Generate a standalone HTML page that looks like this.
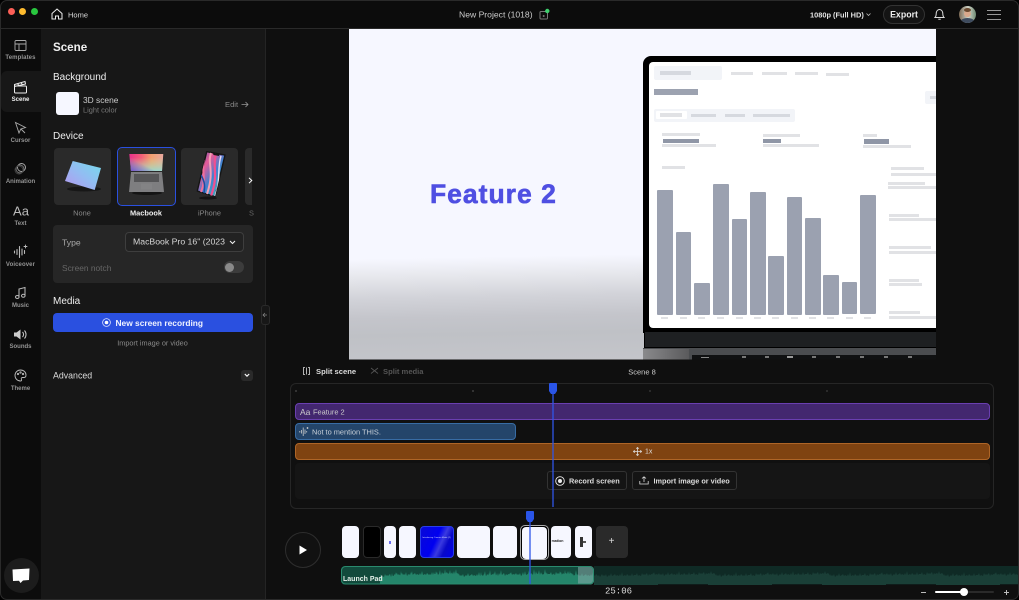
<!DOCTYPE html>
<html><head><meta charset="utf-8"><title>New Project</title>
<style>
*{box-sizing:border-box}
html,body{margin:0;padding:0;background:#000}
#r{position:relative;width:1019px;height:600px;overflow:hidden;background:#0f0f0f;font-family:"Liberation Sans",sans-serif;color:#eee}
#r div,#r span.a,#r svg.a{position:absolute}
.t{position:absolute;white-space:nowrap;line-height:1;transform:translateY(-50%)}
.c{transform:translate(-50%,-50%)}
.nl{position:absolute;left:0;width:41px;text-align:center;font-size:6px;line-height:1;color:#949494;font-weight:bold}
svg{display:block}
.h{font-size:10px;color:#eee}
.m{background:#e1e2e5}
.d{background:#f2f4f8}
.s{background:#d6d9df}
.b{background:#9ba1b0;border-radius:1px;width:15.5px}
.y{background:#e1e2e5;width:7px;height:2px;top:317px}
.th{background:#f6f7ff;border-radius:4px;top:526px;height:32px}
</style></head><body><div id="r">

<!-- top bar -->
<div style="left:0;top:0;width:1019px;height:29px;background:#0c0c0c;border-bottom:1px solid #2a2a2a"></div>
<div style="left:7.5px;top:7.5px;width:7px;height:7px;border-radius:50%;background:#fc5f57"></div>
<div style="left:19px;top:7.5px;width:7px;height:7px;border-radius:50%;background:#febb2e"></div>
<div style="left:31px;top:7.5px;width:7px;height:7px;border-radius:50%;background:#29c73f"></div>
<svg class="a" style="left:51px;top:8px" width="12" height="12" viewBox="0 0 12 12" fill="none" stroke="#eee" stroke-width="1"><path d="M1 5.5 6 1l5 4.5V11H7.5V8h-3v3H1z"/></svg>
<span class="t" style="left:68px;top:14.5px;font-size:7.5px;color:#ddd">Home</span>
<span class="t" style="left:459px;top:14.5px;font-size:8.6px;color:#ccc">New Project (1018)</span>
<svg class="a" style="left:539px;top:8px" width="11" height="12" viewBox="0 0 11 12" fill="none"><rect x="1" y="3.5" width="7.5" height="7.5" rx="1" stroke="#777"/><circle cx="4.7" cy="8" r="1" fill="#777"/><circle cx="8.3" cy="3" r="2.2" fill="#3ecf6d"/></svg>
<span class="t" style="left:810px;top:14.5px;font-size:7.4px;color:#e5e5e5;font-weight:bold">1080p (Full HD)</span>
<svg class="a" style="left:866px;top:13px" width="5" height="3" viewBox="0 0 5 3" fill="none" stroke="#bbb" stroke-width=".8"><path d="M.5.5 2.5 2.5 4.5.5"/></svg>
<div style="left:883px;top:5px;width:42px;height:19px;border-radius:10px;border:1px solid #333;background:#141414"></div>
<span class="t c" style="left:904px;top:14.5px;font-size:8.8px;font-weight:bold;color:#eee">Export</span>
<svg class="a" style="left:934px;top:8px" width="11" height="13" viewBox="0 0 11 13" fill="none" stroke="#ddd" stroke-width="1"><path d="M1 9.5c1-1 1.200-2 1.200-4C2.200 3.500 3.500 1.500 5.500 1.500S8.800 3.500 8.800 5.500c0 2 .2 3 1.200 4zM4.300 11.300h2.400"/></svg>
<div style="left:958.500px;top:6px;width:17px;height:17px;border-radius:50%;background:radial-gradient(circle at 50% 45%,#d9a98c 0 26%,transparent 28%),linear-gradient(90deg,#7d6a55,#cfd4c8 55%,#6f8a72);overflow:hidden"><div style="left:2px;top:12px;width:13px;height:6px;border-radius:50%;background:#3e4b5e"></div><div style="left:5px;top:2px;width:7px;height:4px;border-radius:50%;background:#6b4a30"></div></div>
<div style="left:987px;top:9.500px;width:14px;height:1px;background:#999"></div>
<div style="left:987px;top:14px;width:14px;height:1px;background:#999"></div>
<div style="left:987px;top:18.500px;width:14px;height:1px;background:#999"></div>

<!-- left nav -->
<div style="left:0;top:29px;width:41px;height:571px;background:#0c0c0c"></div>
<div style="left:265px;top:29px;width:1px;height:571px;background:#242424"></div>
<div style="left:41px;top:29px;width:224px;height:571px;background:#171717"></div>
<div style="left:1px;top:71px;width:40px;height:41px;background:#171717;border-radius:6px 0 0 6px"></div>

<svg class="a" style="left:14px;top:39px" width="13" height="13" viewBox="0 0 13 13" fill="none" stroke="#aaa" stroke-width=".9"><rect x="1" y="1.500" width="11" height="10" rx="1"/><path d="M1 5h11M5 5v6.500"/></svg>
<div class="nl" style="top:55px;letter-spacing:.1px">Templates</div>
<svg class="a" style="left:13px;top:80px" width="15" height="14" viewBox="0 0 15 14" fill="none" stroke="#eee" stroke-width="1"><rect x="1.500" y="6" width="12" height="7" rx="1"/><path d="M1.500 4.500 12 1.500l.5 2.500-11 2.500zM4.500 3.800l1.500 1.800M8 2.800l1.500 1.800"/></svg>
<div class="nl" style="top:97px;color:#eee">Scene</div>
<svg class="a" style="left:14px;top:121px" width="13" height="13" viewBox="0 0 13 13" fill="none" stroke="#aaa" stroke-width=".9"><path d="M1.500 1.500 5 12l1.800-4L11.500 6.500zM7 8l4 4"/></svg>
<div class="nl" style="top:138px">Cursor</div>
<svg class="a" style="left:14px;top:162px" width="13" height="13" viewBox="0 0 13 13" fill="none" stroke="#aaa" stroke-width=".9"><circle cx="7.500" cy="5.500" r="4"/><circle cx="6" cy="7" r="4" stroke="#777"/><circle cx="5" cy="8" r="4" stroke="#444"/></svg>
<div class="nl" style="top:179px">Animation</div>
<span class="t c" style="left:21px;top:211px;font-size:13px;color:#bbb">Aa</span>
<div class="nl" style="top:221px">Text</div>
<svg class="a" style="left:13px;top:244px" width="15" height="15" viewBox="0 0 15 15" fill="none" stroke="#bbb" stroke-width="1.100" stroke-linecap="round"><path d="M1.500 7v2M4 5.500v5M6.500 2.500v11M9 5v6M11.500 6.500v3"/><path d="M12.500 1v3M11 2.500h3" stroke-width=".9"/></svg>
<div class="nl" style="top:262px;letter-spacing:.1px">Voiceover</div>
<svg class="a" style="left:14px;top:286px" width="13" height="14" viewBox="0 0 13 14" fill="none" stroke="#bbb" stroke-width="1"><path d="M5 11V3l6-1.500v8"/><ellipse cx="3.300" cy="11" rx="1.800" ry="1.500"/><ellipse cx="9.300" cy="9.800" rx="1.800" ry="1.500"/></svg>
<div class="nl" style="top:303px">Music</div>
<svg class="a" style="left:13px;top:328px" width="15" height="13" viewBox="0 0 15 13" fill="none"><path d="M1 4.500h2.500L7.500 1.500v10L3.500 8.500H1z" fill="#ccc"/><path d="M9.500 4a3.500 3.500 0 0 1 0 5M11.500 2.500a6 6 0 0 1 0 8" stroke="#ccc"/></svg>
<div class="nl" style="top:344px">Sounds</div>
<svg class="a" style="left:14px;top:369px" width="13" height="13" viewBox="0 0 13 13" fill="none" stroke="#bbb" stroke-width=".9"><path d="M6.500 1a5.500 5.500 0 1 0 0 11c1.200 0 1.300-1 .9-1.700-.5-.9.100-1.800 1.100-1.800H10c1.500 0 2-1.200 2-2.500C12 3 9.500 1 6.500 1z"/><circle cx="4" cy="5" r=".7"/><circle cx="6.500" cy="3.500" r=".7"/><circle cx="9" cy="5" r=".7"/></svg>
<div class="nl" style="top:385.500px">Theme</div>
<div style="left:3.500px;top:558px;width:35px;height:35px;border-radius:50%;background:#1c1c1c"></div>
<svg class="a" style="left:11px;top:567px" width="20" height="18" viewBox="0 0 20 18"><path d="M1.500 2.500 18.500 1.500 18 13 12 13.500 9.500 16 8 13.800 2 14z" fill="#fff"/></svg>

<!-- panel -->
<span class="t" style="left:53px;top:48px;font-size:11.600px;font-weight:bold;color:#f0f0f0">Scene</span>
<span class="t h" style="left:53px;top:78px">Background</span>
<div style="left:55.500px;top:92px;width:23px;height:23px;border-radius:3px;background:#f6f7ff"></div>
<span class="t" style="left:83px;top:100px;font-size:8.400px;color:#ccc">3D scene</span>
<span class="t" style="left:83px;top:110px;font-size:7.400px;color:#777">Light color</span>
<span class="t" style="left:225px;top:104.500px;font-size:7.600px;color:#888">Edit</span>
<svg class="a" style="left:241px;top:101px" width="8" height="7" viewBox="0 0 8 7" fill="none" stroke="#999" stroke-width=".8"><path d="M.5 3.500h6.500M4.500 1l2.500 2.500L4.500 6"/></svg>
<span class="t h" style="left:53px;top:136.500px">Device</span>

<div style="left:54px;top:148px;width:57px;height:56.500px;border-radius:4px;background:#2a2a2a"></div>
<svg class="a" style="left:60px;top:155px" width="46" height="42" viewBox="0 0 46 42"><defs><linearGradient id="g1" x1="0" y1="1" x2="1" y2="0"><stop offset="0" stop-color="#b796f0"/><stop offset=".5" stop-color="#93bcf2"/><stop offset="1" stop-color="#74dcec"/></linearGradient></defs><ellipse cx="24" cy="34" rx="17" ry="2.500" fill="#101010" opacity=".7"/><path d="M12.700 6 41 13 34.700 35 5 26z" fill="url(#g1)"/></svg>
<div style="left:117px;top:147px;width:58.500px;height:58.500px;border-radius:5px;background:#2a2a2a;border:1.500px solid #2a50e0"></div>
<svg class="a" style="left:128px;top:153px" width="37" height="44" viewBox="0 0 37 44"><defs><linearGradient id="g2" x1="0" y1="0" x2="1" y2="0"><stop offset="0" stop-color="#e8308c"/><stop offset=".35" stop-color="#f25c78"/><stop offset=".65" stop-color="#f2a070"/><stop offset="1" stop-color="#e8a8a0"/></linearGradient><linearGradient id="g2b" x1="0" y1="0" x2="0" y2="1"><stop offset=".2" stop-color="#c8e8a0" stop-opacity="0"/><stop offset="1" stop-color="#98d8d0" stop-opacity=".95"/></linearGradient><linearGradient id="g2c" x1="0" y1="1" x2="1" y2="0"><stop offset="0" stop-color="#7040c8" stop-opacity=".9"/><stop offset=".4" stop-color="#7040c8" stop-opacity="0"/></linearGradient></defs><ellipse cx="19" cy="40" rx="15" ry="2" fill="#141414"/><path d="M1.300 1H35.300L34 18H3z" fill="url(#g2)"/><path d="M1.300 1H35.300L34 18H3z" fill="url(#g2b)"/><path d="M1.300 1H35.300L34 18H3z" fill="url(#g2c)"/><path d="M3 19H34L36 39H1z" fill="#7e7e80"/><rect x="6" y="21" width="25" height="8" fill="#555557"/><rect x="13" y="30.500" width="11" height="6" fill="#838385"/></svg>
<div style="left:181px;top:148px;width:57px;height:56.500px;border-radius:4px;background:#2a2a2a"></div>
<svg class="a" style="left:195px;top:150px" width="32" height="52" viewBox="0 0 32 52"><defs><linearGradient id="g3" x1="0" y1="0" x2="1" y2="1"><stop offset="0" stop-color="#3a5fb0"/><stop offset=".3" stop-color="#e85a98"/><stop offset=".55" stop-color="#4080d0"/><stop offset=".8" stop-color="#40a8c0"/><stop offset="1" stop-color="#e85a98"/></linearGradient><clipPath id="pc"><path d="M11.700 1.700 30 5 20 46.700 2.300 41z"/></clipPath></defs><ellipse cx="13" cy="48" rx="9" ry="1.500" fill="#141414"/><path d="M11.700 1.700 30 5 20 46.700 2.300 41z" fill="url(#g3)" stroke="#151515" stroke-width="1.400" stroke-linejoin="round"/><g clip-path="url(#pc)" fill="none"><path d="M16 3C12 14 20 20 12 44" stroke="#f4a0b8" stroke-width="2"/><path d="M21 4C17 16 24 24 16 46" stroke="#f04f90" stroke-width="2.200"/><path d="M26 6C22 18 26 30 20 46" stroke="#e8e0f4" stroke-width="1.400"/><path d="M9 10C6 20 12 28 6 42" stroke="#f0709c" stroke-width="2"/><path d="M6 25C10 32 10 36 9 44" stroke="#1c4ca0" stroke-width="1.500"/></g><path d="M18 3.200 24.500 4.300 24 6 18.500 5z" fill="#151515"/></svg>
<div style="left:245px;top:148px;width:7px;height:56.500px;border-radius:4px 0 0 4px;background:#2a2a2a"></div>
<svg class="a" style="left:248px;top:177px" width="5" height="7" viewBox="0 0 5 7" fill="none" stroke="#fff" stroke-width="1"><path d="M1 .8 3.800 3.500 1 6.200"/></svg>
<span class="t c" style="left:82px;top:212.500px;font-size:7.400px;color:#888">None</span>
<span class="t c" style="left:146px;top:212.500px;font-size:7.400px;color:#eee;font-weight:bold">Macbook</span>
<span class="t c" style="left:209.500px;top:212.500px;font-size:7.400px;color:#888">iPhone</span>
<span class="t" style="left:249px;top:212.500px;font-size:7.400px;color:#666">S</span>

<div style="left:53px;top:225px;width:200px;height:58px;background:#262626;border-radius:4px"></div>
<span class="t" style="left:62px;top:242.500px;font-size:8.600px;color:#aaa">Type</span>
<div style="left:125px;top:232px;width:118.500px;height:19.500px;border:1px solid #3e3e3e;border-radius:4px;background:#222"></div>
<span class="t" style="left:133px;top:242px;font-size:8.700px;color:#d8d8d8">MacBook Pro 16" (2023</span>
<svg class="a" style="left:229px;top:240px" width="7" height="5" viewBox="0 0 7 5" fill="none" stroke="#eee" stroke-width="1.100"><path d="M1 1 3.500 3.500 6 1"/></svg>
<span class="t" style="left:62px;top:267.500px;font-size:8.400px;color:#666">Screen notch</span>
<div style="left:224px;top:261px;width:19.500px;height:12px;background:#3c3c3c;border-radius:6px"></div>
<div style="left:225px;top:262.500px;width:9px;height:9px;background:#8a8a8a;border-radius:50%"></div>
<span class="t h" style="left:53px;top:301.500px">Media</span>
<div style="left:53px;top:313px;width:200px;height:19px;background:#2a50e0;border-radius:4px"></div>
<svg class="a" style="left:102px;top:318px" width="9" height="9" viewBox="0 0 9 9" fill="none"><circle cx="4.500" cy="4.500" r="3.900" stroke="#dfe5ff" stroke-width=".8"/><circle cx="4.500" cy="4.500" r="1.800" fill="#fff"/></svg>
<span class="t" style="left:115.500px;top:322.500px;font-size:8.400px;color:#f0f3ff;font-weight:bold">New screen recording</span>
<span class="t c" style="left:152.500px;top:342.500px;font-size:7.300px;color:#8a8a8a">Import image or video</span>
<span class="t" style="left:53px;top:375.500px;font-size:8.800px;color:#ddd">Advanced</span>
<div style="left:241px;top:370px;width:12px;height:11px;background:#2a2a2a;border-radius:3px"></div>
<svg class="a" style="left:244px;top:373px" width="6" height="5" viewBox="0 0 6 5" fill="none" stroke="#fff" stroke-width="1.100"><path d="M.8 1 3 3.200 5.200 1"/></svg>
<div style="left:260.500px;top:305px;width:9px;height:20px;background:#171717;border:1px solid #2a2a2a;border-radius:3px"></div>
<svg class="a" style="left:262px;top:312px" width="6" height="6" viewBox="0 0 6 6" fill="none" stroke="#888" stroke-width=".7"><path d="M5 3H1M3 1 1 3l2 2"/></svg>

<!-- canvas -->
<div style="left:0;top:0;width:1019px;height:600px;clip-path:inset(29px 83px 240.500px 349px)">
<div style="left:349px;top:29px;width:587px;height:331px;background:linear-gradient(179deg,#f6f7ff 0,#f6f7ff 67.500%,#e6e7ec 73%,#d2d3d9 79%,#c4c5cb 85%,#bfc1c6 90%,#c5c6cb 100%)"></div>
<span class="t" style="left:430px;top:194px;font-size:26.500px;font-weight:bold;color:#4f4fe2;letter-spacing:1px;-webkit-text-stroke:.6px #4f4fe2">Feature 2</span>

<div style="left:642.500px;top:56px;width:310px;height:277px;background:#000;border-radius:8px 8px 0 0"></div>
<div style="left:644px;top:330px;width:300px;height:18px;background:#000"></div>
<div style="left:645px;top:332px;width:295px;height:15px;background:#1e2022"></div>
<div style="left:643px;top:348px;width:300px;height:12px;background:#4b4d50"></div>
<div style="left:643px;top:349px;width:46px;height:11px;background:linear-gradient(90deg,#8a8a8c,#5a5a5c)"></div>
<div style="left:692px;top:355px;width:250px;height:5px;background:#101112"></div>
<div style="left:701px;top:357px;width:8px;height:1px;background:#888"></div>
<div style="left:742px;top:356px;width:4px;height:2px;background:#777"></div>
<div style="left:765px;top:356px;width:4px;height:2px;background:#777"></div>
<div style="left:787px;top:355.500px;width:6px;height:2px;background:#999"></div>
<div style="left:812px;top:356px;width:4px;height:2px;background:#777"></div>
<div style="left:836px;top:356px;width:4px;height:2px;background:#777"></div>
<div style="left:860px;top:356px;width:4px;height:2px;background:#777"></div>
<div style="left:884px;top:356px;width:4px;height:2px;background:#777"></div>
<div style="left:908px;top:356px;width:4px;height:2px;background:#777"></div>
<div style="left:649px;top:62px;width:300px;height:265.500px;background:#fff;border-radius:4px"></div>

<div class="d" style="left:654px;top:66px;width:68px;height:14px;border-radius:2px"></div>
<div class="s" style="left:660px;top:71px;width:31px;height:3.500px"></div>
<div class="m" style="left:731px;top:72px;width:22px;height:3px"></div>
<div class="m" style="left:762px;top:72px;width:25px;height:3px"></div>
<div class="m" style="left:795px;top:72px;width:23px;height:3px"></div>
<div class="m" style="left:826px;top:72.500px;width:23px;height:3px"></div>
<div style="left:654px;top:89px;width:44px;height:6px;background:#9ca2b0"></div>
<div class="d" style="left:925px;top:91px;width:15px;height:13px;border-radius:2px"></div>
<div class="s" style="left:930px;top:96px;width:8px;height:3px"></div>
<div class="d" style="left:654px;top:109px;width:141px;height:13px;border-radius:2px"></div>
<div style="left:656px;top:111px;width:31px;height:8px;background:#fff;border-radius:1px"></div>
<div class="m" style="left:660px;top:113px;width:22px;height:4px"></div>
<div class="s" style="left:691px;top:114px;width:25px;height:3px"></div>
<div class="s" style="left:725px;top:114px;width:20px;height:3px"></div>
<div class="s" style="left:753px;top:114px;width:37px;height:3px"></div>

<div class="m" style="left:662px;top:133px;width:38px;height:3px"></div>
<div style="left:662.500px;top:138.500px;width:36.500px;height:4.500px;background:#8f96a6"></div>
<div class="m" style="left:662px;top:144px;width:54px;height:2.500px"></div>
<div class="m" style="left:763px;top:133.500px;width:37px;height:3px"></div>
<div style="left:763px;top:138.500px;width:18px;height:4.500px;background:#8f96a6"></div>
<div class="m" style="left:763px;top:144px;width:56px;height:2.500px"></div>
<div class="m" style="left:863px;top:134px;width:14px;height:3px"></div>
<div style="left:863.500px;top:139px;width:25px;height:4.500px;background:#8f96a6"></div>
<div class="m" style="left:863px;top:145px;width:48px;height:2.500px"></div>
<div class="m" style="left:662px;top:166px;width:23px;height:3px"></div>

<div class="m" style="left:891px;top:167px;width:33px;height:3px"></div>
<div class="m" style="left:891px;top:172.500px;width:46px;height:3px"></div>
<div class="m" style="left:888px;top:182px;width:37px;height:3px"></div>
<div class="m" style="left:888px;top:186px;width:48px;height:3px"></div>
<div class="m" style="left:889px;top:214px;width:30px;height:3px"></div>
<div class="m" style="left:889px;top:218px;width:47px;height:3px"></div>
<div class="m" style="left:889px;top:246px;width:42px;height:3px"></div>
<div class="m" style="left:889px;top:251px;width:47px;height:3px"></div>
<div class="m" style="left:889px;top:279px;width:30px;height:3px"></div>
<div class="m" style="left:889px;top:283px;width:33px;height:3px"></div>
<div class="m" style="left:889px;top:311px;width:31px;height:3px"></div>
<div class="m" style="left:889px;top:316px;width:47px;height:3px"></div>

<div class="b" style="left:657px;top:190px;height:125px"></div>
<div class="b" style="left:675.700px;top:232px;height:83px"></div>
<div class="b" style="left:694px;top:283px;height:32px"></div>
<div class="b" style="left:713px;top:184px;height:131px"></div>
<div class="b" style="left:731.500px;top:219px;height:96px"></div>
<div class="b" style="left:750px;top:192px;height:123px"></div>
<div class="b" style="left:768px;top:256px;height:59px"></div>
<div class="b" style="left:786.500px;top:197px;height:118px"></div>
<div class="b" style="left:805px;top:218px;height:96.500px"></div>
<div class="b" style="left:823px;top:275px;height:39.500px"></div>
<div class="b" style="left:841.500px;top:282px;height:32px"></div>
<div class="b" style="left:860px;top:195px;height:119px"></div>
<div class="y" style="left:661px"></div><div class="y" style="left:680px"></div><div class="y" style="left:698px"></div><div class="y" style="left:717px"></div><div class="y" style="left:735.500px"></div><div class="y" style="left:754px"></div><div class="y" style="left:772px"></div><div class="y" style="left:791px"></div><div class="y" style="left:809px"></div><div class="y" style="left:827px"></div><div class="y" style="left:846px"></div><div class="y" style="left:864px;top:316.500px"></div>
</div>

<!-- timeline toolbar -->
<svg class="a" style="left:302px;top:367px" width="9" height="8" viewBox="0 0 9 8" fill="none" stroke="#ddd" stroke-width=".8"><path d="M3 .5H1.500v7H3M6 .5h1.500v7H6M4.500 .5v7"/></svg>
<span class="t" style="left:316px;top:371.500px;font-size:7.600px;color:#ddd;font-weight:bold">Split scene</span>
<svg class="a" style="left:370px;top:367px" width="9" height="8" viewBox="0 0 9 8" fill="none" stroke="#555" stroke-width=".8"><path d="M1 1 8 6.500M8 1 1 6.500"/></svg>
<span class="t" style="left:383px;top:371.500px;font-size:7.600px;color:#555;font-weight:bold">Split media</span>
<span class="t c" style="left:642px;top:371.500px;font-size:7.500px;color:#ccc">Scene 8</span>

<div style="left:290px;top:383px;width:704px;height:126px;border:1px solid #262626;border-radius:6px;background:#101010"></div>
<div style="left:295px;top:390px;width:2px;height:2px;background:#333"></div>
<div style="left:472px;top:390px;width:2px;height:2px;background:#333"></div>
<div style="left:649px;top:390px;width:2px;height:2px;background:#2a2a2a"></div>
<div style="left:826px;top:390px;width:2px;height:2px;background:#2a2a2a"></div>

<div style="left:295px;top:403px;width:695px;height:17px;background:#43276f;border:1px solid #6a3fb0;border-radius:4px"></div>
<span class="t" style="left:300px;top:412px;font-size:8.500px;color:#ccc">Aa</span>
<span class="t" style="left:313px;top:412px;font-size:7.400px;color:#ccc">Feature 2</span>
<div style="left:295px;top:423px;width:221px;height:17px;background:#24456a;border:1px solid #386ca4;border-radius:4px"></div>
<svg class="a" style="left:299px;top:426px" width="10" height="11" viewBox="0 0 10 11" fill="none" stroke="#ccc" stroke-width=".8"><path d="M.8 5v1.500M2.500 4v3.500M4.200 1.500v8.500M6 3.500v4.500M7.700 5v1.500M8.500 1v2M7.500 2h2"/></svg>
<span class="t" style="left:312px;top:432px;font-size:7.400px;color:#c8d0d8">Not to mention THIS.</span>
<div style="left:295px;top:443px;width:695px;height:17px;background:#7f4311;border:1px solid #ae6527;border-radius:4px"></div>
<svg class="a" style="left:633px;top:447px" width="9" height="9" viewBox="0 0 9 9" fill="none" stroke="#ddd" stroke-width=".8"><path d="M4.500 .5v8M.5 4.500h8M3.300 1.700 4.500 .5l1.200 1.200M3.300 7.300l1.200 1.200 1.200-1.200M1.700 3.300.5 4.500l1.200 1.200M7.300 3.300l1.200 1.200-1.200 1.200"/></svg>
<span class="t" style="left:645px;top:452px;font-size:7px;color:#ddd">1x</span>
<div style="left:295px;top:463px;width:695px;height:36px;background:#151515;border-radius:4px"></div>
<div style="left:547px;top:471px;width:80px;height:19px;border:1px solid #333;border-radius:3px;background:#141414"></div>
<svg class="a" style="left:554.500px;top:475.500px" width="10" height="10" viewBox="0 0 10 10" fill="none"><circle cx="5" cy="5" r="4.300" stroke="#eee" stroke-width=".9"/><circle cx="5" cy="5" r="2" fill="#eee"/></svg>
<span class="t" style="left:569px;top:481px;font-size:7.300px;color:#ddd;font-weight:bold">Record screen</span>
<div style="left:632px;top:471px;width:105px;height:19px;border:1px solid #333;border-radius:3px;background:#141414"></div>
<svg class="a" style="left:639px;top:476px" width="10" height="9" viewBox="0 0 10 9" fill="none" stroke="#ddd" stroke-width=".8"><path d="M5 6V.8M3 2.500 5 .8l2 1.700M.8 5v3h8.400V5"/></svg>
<span class="t" style="left:653.500px;top:481px;font-size:7.300px;color:#ddd;font-weight:bold">Import image or video</span>

<svg class="a" style="left:551px;top:390px" width="4" height="118" viewBox="0 0 4 118"><path d="M2 0V117" stroke="#2f56e8" stroke-width="1.300"/></svg>
<svg class="a" style="left:549px;top:383px" width="8" height="11" viewBox="0 0 8 11"><path d="M1 0h6a1 1 0 0 1 1 1v7L6 11H2L0 8V1a1 1 0 0 1 1-1z" fill="#2a55e8"/></svg>

<!-- bottom -->
<div style="left:285px;top:532px;width:36px;height:36px;border:1px solid #2e2e2e;border-radius:50%;background:#111"></div>
<svg class="a" style="left:299px;top:545px" width="9" height="10" viewBox="0 0 9 10"><path d="M.5.500 8 5 .5 9.500z" fill="#fff"/></svg>

<div class="th" style="left:342px;width:17px"></div>
<div class="th" style="left:362.500px;width:18px;background:#000;border:1px solid #2a2a2a"></div>
<div class="th" style="left:384px;width:12px"></div>
<div style="left:389px;top:541px;width:2px;height:2.500px;background:#6a6cf0"></div>
<div class="th" style="left:399px;width:17px"></div>
<div class="th" style="left:419.500px;width:34.500px;background:linear-gradient(115deg,#0808d8 0,#0000f0 45%,#3a3ae0 60%,#0808c8 75%,#0000e8 100%);border:1px solid #2a3fe8"></div>
<span class="t c" style="left:436.500px;top:538px;font-size:2.200px;color:#cfd4ff">Introducing Cinema Mode (2)</span>
<div class="th" style="left:457px;width:33px"></div>
<div class="th" style="left:493px;width:24px"></div>
<div style="left:520px;top:525px;width:28.500px;height:35px;border:1.500px solid #aaa;border-radius:5px;background:#000"></div>
<div class="th" style="left:521.500px;top:526.500px;width:25.500px;height:32px"></div>
<div class="th" style="left:551px;width:20px"></div>
<span class="t c" style="left:557.500px;top:542px;font-size:3.600px;font-weight:bold;color:#222">mation</span>
<div class="th" style="left:575px;width:17px"></div>
<div style="left:580px;top:537px;width:2.500px;height:10px;background:#333"></div>
<div style="left:583px;top:541px;width:3px;height:2px;background:#555"></div>
<div style="left:595.500px;top:526px;width:32px;height:32px;background:#2a2a2a;border-radius:4px"></div>
<span class="t c" style="left:611.500px;top:542px;font-size:10px;color:#ddd">+</span>

<svg class="a" style="left:341px;top:566px" width="677" height="19" viewBox="0 0 677 19">
<defs>
<clipPath id="cl"><rect x="0" y="0" width="253" height="18.500" rx="4"/></clipPath>
<path id="w" d="M0 18V8l1 1 1-2 2 2 1-1 1 2 2-3 1 2 1-1 1 1 1-2 1 3 2-2 1 1 1-3 1 3 2-1 1-1 1 2 1-1 2 1 1-2 1 2 1-4 1 4 2-1 1 1 1-2 2 2 1-1 1 1 1-3 1 3 1-1 2 0 1-2 1 3 1-1 2 1 1-3 1 2 1-1 1 1 2-2 1 3 1-2 1 1 2-1 1 1 1-3 1 3 2-1 1 1V18z"/>
<path id="w2" d="M0 18V10l1-3 1 4 1-5 1 5 2-2 1-4 1 6 1-3 2 2 1-6 1 6 1-2 2 1 1-4 1 5 1-3 1 3 2-1 1-5 1 6 1-2 1 2V18z"/>
</defs>
<g clip-path="url(#cl)">
<rect width="253" height="19" fill="#124a3c"/>
<g fill="#24856a">
<use href="#w" x="-4" y="2"/><use href="#w" x="53" y="0"/><use href="#w" x="110" y="1"/><use href="#w" x="167" y="0"/><use href="#w" x="224" y="1"/>
<use href="#w2" x="48" y="1"/><use href="#w2" x="92" y="-1"/><use href="#w2" x="137" y="0"/><use href="#w2" x="181" y="-1"/><use href="#w2" x="212" y="0"/>
</g>
<rect width="39" height="19" fill="#124a3c"/>
<rect x="237" y="0" width="16" height="19" fill="#8aa" opacity=".55"/>
</g>
<rect x=".5" y=".5" width="252" height="17.500" rx="4" fill="none" stroke="#2a8a6e"/>
<rect x="253" y="0" width="424" height="18.500" fill="#0f2a25"/>
<g fill="#1a3f37">
<use href="#w" x="253" y="1"/><use href="#w" x="310" y="0"/><use href="#w" x="367" y="1"/><use href="#w" x="424" y="0"/><use href="#w" x="481" y="1"/><use href="#w" x="538" y="0"/><use href="#w" x="595" y="1"/><use href="#w" x="652" y="0"/>
</g>
<text x="2" y="15" font-family="Liberation Sans, sans-serif" font-size="7" font-weight="bold" fill="#e4efe9">Launch Pad</text>
</svg>

<svg class="a" style="left:528px;top:520px" width="4" height="65" viewBox="0 0 4 65"><path d="M2 0V64" stroke="#2f56e8" stroke-width="1.300"/></svg>
<svg class="a" style="left:526px;top:511px" width="8" height="11" viewBox="0 0 8 11"><path d="M1 0h6a1 1 0 0 1 1 1v7L6 11H2L0 8V1a1 1 0 0 1 1-1z" fill="#2a55e8"/></svg>

<span class="t" style="left:605px;top:592px;font-family:'Liberation Mono',monospace;font-size:9px;color:#ddd">25:06</span>
<div style="left:921px;top:591.500px;width:5px;height:1px;background:#bbb"></div>
<div style="left:935px;top:591px;width:59px;height:2px;background:#2a2a2a;border-radius:1px"></div>
<div style="left:935px;top:590.800px;width:29px;height:2.400px;background:#fff;border-radius:1px"></div>
<div style="left:960px;top:588px;width:8px;height:8px;background:#fff;border-radius:50%"></div>
<div style="left:1003.500px;top:591.500px;width:5px;height:1px;background:#bbb"></div>
<div style="left:1005.500px;top:589.500px;width:1px;height:5px;background:#bbb"></div>

<div style="left:0;top:0;width:1019px;height:600px;border:1px solid #2a2a2a;border-radius:7px;box-shadow:0 0 0 4px #000"></div>
</div></body></html>
